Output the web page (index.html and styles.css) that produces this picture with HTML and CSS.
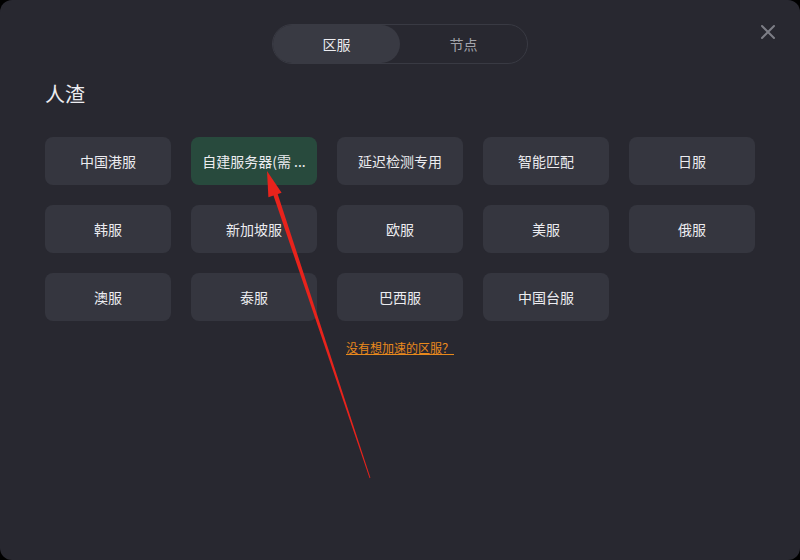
FILE: index.html
```html
<!DOCTYPE html>
<html lang="zh">
<head>
  <meta charset="utf-8" />
  <title>区服选择</title>
  <link rel="stylesheet" href="styles.css">
</head>
<body>
  <div class="dialog">
    <div class="tabs">
      <button class="tab active">区服</button>
      <button class="tab">节点</button>
    </div>
    <button class="close" aria-label="关闭">
      <svg width="16" height="16" viewBox="0 0 16 16"><path d="M2 2L14 14M14 2L2 14" stroke="#7d7e86" stroke-width="2" stroke-linecap="round"/></svg>
    </button>

    <h2 class="game-title">人渣</h2>

    <div class="server-grid">
      <button class="server">中国港服</button>
      <button class="server selected">自建服务器(需 ...</button>
      <button class="server">延迟检测专用</button>
      <button class="server">智能匹配</button>
      <button class="server">日服</button>
      <button class="server">韩服</button>
      <button class="server">新加坡服</button>
      <button class="server">欧服</button>
      <button class="server">美服</button>
      <button class="server">俄服</button>
      <button class="server">澳服</button>
      <button class="server">泰服</button>
      <button class="server">巴西服</button>
      <button class="server">中国台服</button>
    </div>

    <div class="missing">
      <a href="#">没有想加速的区服？</a>
    </div>

    <!-- 标注箭头 -->
    <svg class="arrow" width="800" height="560" viewBox="0 0 800 560">
      <polygon points="276.2,189.4 271.8,190.6 369.6,478.2 370.4,477.8" fill="#e8231c"/>
      <polygon points="267,171 281.6,192.8 268.4,197.2" fill="#e8231c"/>
    </svg>
  </div>
</body>
</html>
```

FILE: styles.css
```css
:root {
  --color-bg: #282830;
  --color-card: #35363f;
  --color-selected: #284a3d;
  --color-text: #ececf0;
  --color-muted: #a3a4ab;
  --color-link: #e8891c;
  --radius: 8px;
}

*, *::before, *::after {
  box-sizing: border-box;
  margin: 0;
  padding: 0;
}

body {
  background: #000;
  font-family: 'Microsoft YaHei', 'Noto Sans CJK SC', 'Noto Sans', sans-serif;
  color: var(--color-text);
}

.dialog {
  position: relative;
  width: 800px;
  height: 560px;
  background: var(--color-bg);
  border-radius: 12px;
  padding: 24px 45px 0;
  overflow: hidden;
}

/* Tabs */
.tabs {
  display: flex;
  width: 256px;
  height: 40px;
  margin: 0 auto;
  border: 1px solid #393a43;
  border-radius: 20px;
}

.tab {
  flex: 1;
  background: none;
  border: none;
  border-radius: 20px;
  color: var(--color-muted);
  font: inherit;
  font-size: 14px;
  cursor: pointer;
}

.tab.active {
  background: #393a43;
  color: var(--color-text);
}

.close {
  position: absolute;
  top: 24px;
  right: 24px;
  background: none;
  border: none;
  cursor: pointer;
}

.game-title {
  font-size: 20px;
  font-weight: 400;
  line-height: 28px;
  margin-top: 16px;
}

/* Server grid */
.server-grid {
  display: grid;
  grid-template-columns: repeat(5, 126px);
  gap: 20px;
  margin-top: 29px;
}

.server {
  height: 48px;
  background: var(--color-card);
  border: none;
  border-radius: var(--radius);
  color: var(--color-text);
  font: inherit;
  font-size: 14px;
  padding: 0 8px;
  white-space: nowrap;
  overflow: hidden;
  cursor: pointer;
}

.server.selected {
  background: var(--color-selected);
}

.missing {
  text-align: center;
  margin-top: 18px;
  font-size: 12px;
}

.missing a {
  color: var(--color-link);
}

.arrow {
  position: absolute;
  top: 0;
  left: 0;
  pointer-events: none;
}
```
